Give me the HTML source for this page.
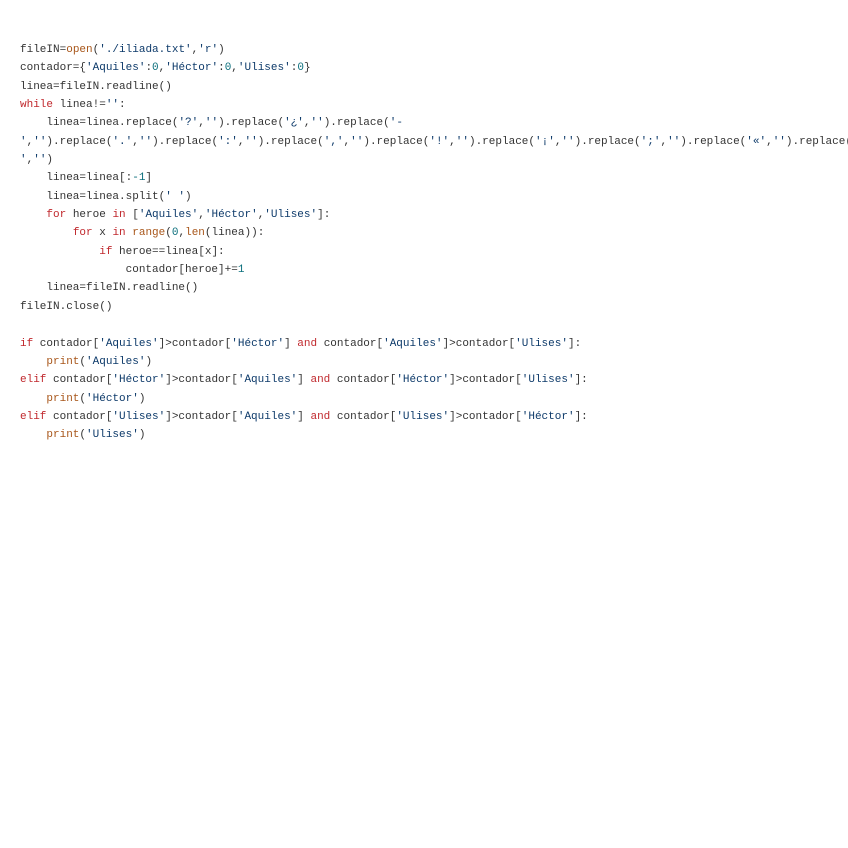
<!DOCTYPE html>
<html><head><meta charset="utf-8"><style>
html,body{margin:0;padding:0;background:#fff;width:848px;height:848px;overflow:hidden}
pre{margin:0;position:absolute;left:20px;top:41px;width:828px;overflow:hidden;font-family:"Liberation Mono",monospace;font-size:11px;line-height:18.35px;color:#333;white-space:pre}
.k{color:#c0282d}.s{color:#0d3a6a}.n{color:#0b6f7c}.b{color:#a8561a}
</style></head><body><pre>fileIN=<span class="b">open</span>(<span class="s">'./iliada.txt'</span>,<span class="s">'r'</span>)
contador={<span class="s">'Aquiles'</span>:<span class="n">0</span>,<span class="s">'Héctor'</span>:<span class="n">0</span>,<span class="s">'Ulises'</span>:<span class="n">0</span>}
linea=fileIN.readline()
<span class="k">while</span> linea!=<span class="s">''</span>:
    linea=linea.replace(<span class="s">'?'</span>,<span class="s">''</span>).replace(<span class="s">'¿'</span>,<span class="s">''</span>).replace(<span class="s">'-</span>
<span class="s">'</span>,<span class="s">''</span>).replace(<span class="s">'.'</span>,<span class="s">''</span>).replace(<span class="s">':'</span>,<span class="s">''</span>).replace(<span class="s">','</span>,<span class="s">''</span>).replace(<span class="s">'!'</span>,<span class="s">''</span>).replace(<span class="s">'¡'</span>,<span class="s">''</span>).replace(<span class="s">';'</span>,<span class="s">''</span>).replace(<span class="s">'«'</span>,<span class="s">''</span>).replace(<span class="s">'»'</span>,<span class="s">''</span>)
<span class="s">'</span>,<span class="s">''</span>)
    linea=linea[:<span class="n">-1</span>]
    linea=linea.split(<span class="s">' '</span>)
    <span class="k">for</span> heroe <span class="k">in</span> [<span class="s">'Aquiles'</span>,<span class="s">'Héctor'</span>,<span class="s">'Ulises'</span>]:
        <span class="k">for</span> x <span class="k">in</span> <span class="b">range</span>(<span class="n">0</span>,<span class="b">len</span>(linea)):
            <span class="k">if</span> heroe==linea[x]:
                contador[heroe]+=<span class="n">1</span>
    linea=fileIN.readline()
fileIN.close()

<span class="k">if</span> contador[<span class="s">'Aquiles'</span>]&gt;contador[<span class="s">'Héctor'</span>] <span class="k">and</span> contador[<span class="s">'Aquiles'</span>]&gt;contador[<span class="s">'Ulises'</span>]:
    <span class="b">print</span>(<span class="s">'Aquiles'</span>)
<span class="k">elif</span> contador[<span class="s">'Héctor'</span>]&gt;contador[<span class="s">'Aquiles'</span>] <span class="k">and</span> contador[<span class="s">'Héctor'</span>]&gt;contador[<span class="s">'Ulises'</span>]:
    <span class="b">print</span>(<span class="s">'Héctor'</span>)
<span class="k">elif</span> contador[<span class="s">'Ulises'</span>]&gt;contador[<span class="s">'Aquiles'</span>] <span class="k">and</span> contador[<span class="s">'Ulises'</span>]&gt;contador[<span class="s">'Héctor'</span>]:
    <span class="b">print</span>(<span class="s">'Ulises'</span>)</pre></body></html>
